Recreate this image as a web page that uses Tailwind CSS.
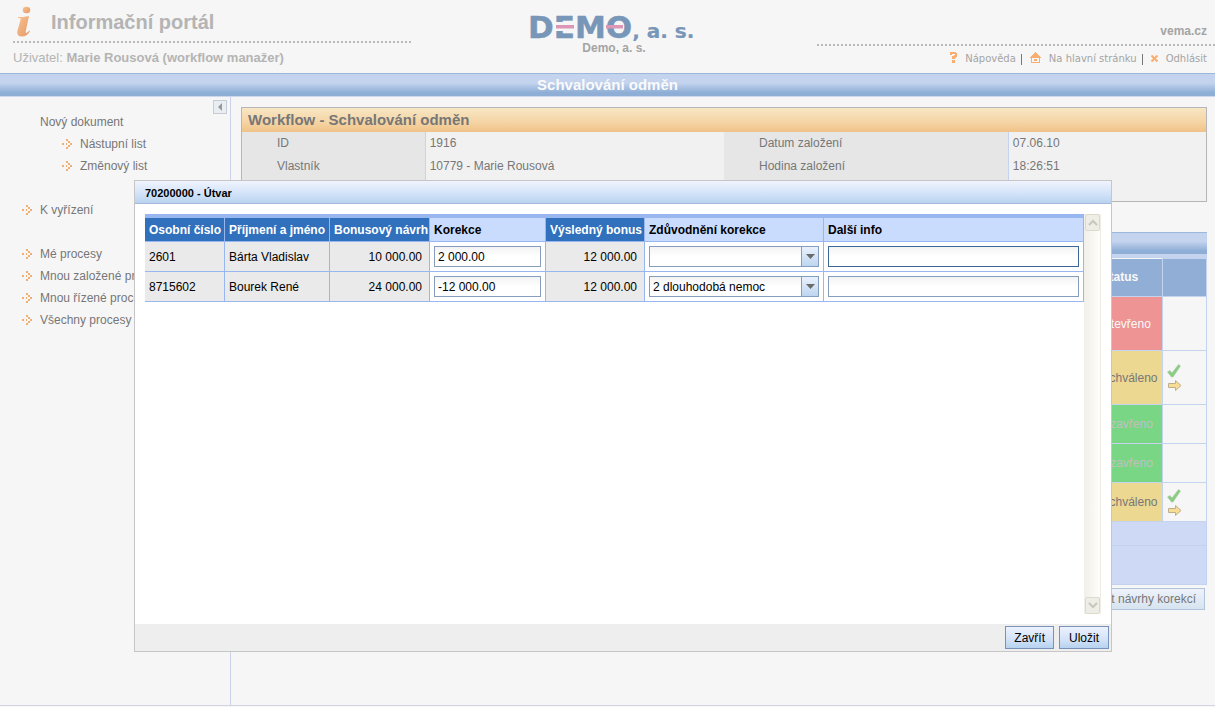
<!DOCTYPE html>
<html lang="cs">
<head>
<meta charset="utf-8">
<title>Informační portál - Schvalování odměn</title>
<script src="https://cdn.jsdelivr.net/npm/@tailwindcss/browser@4"></script>
</head>
<body class="relative flex min-h-screen flex-col bg-[#f6f6f6] font-['Liberation_Sans',Arial,sans-serif] text-xs text-[#777]">
<svg class="hidden" aria-hidden="true">
  <symbol id="arrow" viewBox="0 0 10 10"><path shape-rendering="crispEdges" fill="#efae74" d="M0 4h2v2H0zM4 0h2v2H4zM6 2h2v2H6zM8 4h2v2H8zM6 6h2v2H6zM4 8h2v2H4zM4 4h1v2H4z"/></symbol>
  <symbol id="check" viewBox="0 0 14 14"><path fill="#8ccb84" stroke="#a5cf9d" stroke-width=".6" d="M.5 8 3 6.500l2 2.500L11.500.5l2 1.500L6 13H4.500z"/></symbol>
  <symbol id="next" viewBox="0 0 14 11"><path fill="#f6dc94" stroke="#bfb08c" d="M.5 3.500h7v-3l5.500 5-5.500 5v-3h-7z"/></symbol>
</svg>

<header class="flex h-[73px] justify-between text-[#b4b4b4]">
  <div class="w-[398px] ml-[13px] flex flex-col">
    <div class="flex h-[41px] items-center gap-5 pt-0.5">
      <svg class="ml-1 h-8 w-[14px]" viewBox="0 0 14 32" aria-hidden="true">
        <defs><linearGradient id="ig" x1="0" y1="0" x2="1" y2="1"><stop offset="0" stop-color="#f8c290"/><stop offset="1" stop-color="#e49a68"/></linearGradient></defs>
        <ellipse cx="9.500" cy="4" rx="3.800" ry="3.300" fill="url(#ig)"/>
        <path fill="url(#ig)" d="M1 11c3 0 7 0 11-1L8.800 25c-.4 1.800.2 2.400 1.500 1.600.9-.6 1.200-1.200 1.700-2.200l1 .6C11.500 28.500 8.500 30.500 5 30.500.8 30.500-.3 28 .5 24.500L3.500 14C4 12.500 3.500 12 1 12z"/>
      </svg>
      <h1 class="text-xl font-bold">Informační portál</h1>
    </div>
    <div class="h-[2px] bg-[repeating-linear-gradient(90deg,#b9b9b9_0_2px,transparent_2px_4px)]"></div>
    <p class="mt-1.5 text-[13px] leading-[18px]">Uživatel: <b>Marie Rousová (workflow manažer)</b></p>
  </div>
  <div class="flex flex-col items-center">
    <svg class="h-[41px] w-[174px] overflow-visible" viewBox="0 0 174 41" role="img" aria-label="DEMO, a. s.">
      <text x="1" y="38" fill="#7896b8" stroke="#7896b8" stroke-width=".5" font-family="DejaVu Sans" font-weight="bold" font-size="31">DEMO<tspan font-size="20" stroke-width=".2">, a. s.</tspan></text>
      <path fill="#f6f6f6" d="M28 22h19v9H28z"/><path fill="#dc96b6" d="M29 25h18v3.500H29zM79 25h17v3.500H79z"/>
    </svg>
    <strong class="leading-[15px] text-[#a4a4a4]">Demo, a. s.</strong>
  </div>
  <div class="flex w-[398px] flex-col text-right">
    <strong class="flex h-[44px] items-end justify-end pr-2 pb-[5px] leading-4 text-[#a4a4a4]">vema.cz</strong>
    <div class="h-[2px] bg-[repeating-linear-gradient(90deg,#b9b9b9_0_2px,transparent_2px_4px)]"></div>
    <nav class="mt-[5px] flex items-center justify-end gap-[5px] pr-2 font-['DejaVu_Sans',sans-serif] text-[10px] leading-4 text-[#a4a4a4]">
      <a href="#" class="flex items-center gap-2"><svg class="mb-[3px] h-[11px] w-[7px]" viewBox="0 0 7 11"><path fill="#f8ae70" d="M0 0h6v1h1v4H6v1H5v1H2V4h2V3h1V2H2v1H0zM2 8h3v3H2z"/></svg>Nápověda</a>
      <span class="h-[11px] w-px bg-[#777]"></span>
      <a href="#" class="ml-[3px] flex items-center gap-2"><svg class="mb-[3px] h-[11px] w-[11px]" viewBox="0 0 11 11"><path fill="#f8ae70" fill-rule="evenodd" d="M5 0h1v1h1v1h1v1h1v1h1v1h1v1h-1v5H1V6H0V5h1V4h1V3h1V2h1V1h1zM2 6v4h7V6zM4 7h3v2H4z"/></svg>Na hlavní stránku</a>
      <span class="h-[11px] w-px bg-[#777]"></span>
      <a href="#" class="ml-[3px] flex items-center gap-2"><svg class="mb-0.5 h-[7px] w-[7px]" viewBox="0 0 7 7"><path stroke="#f8ae70" stroke-width="2" d="m.5.5 6 6M6.500.5l-6 6"/></svg>Odhlásit</a>
    </nav>
  </div>
</header>

<h2 class="h-6 border-y border-t-[#9db7db] border-b-[#ccd6ec] bg-linear-to-b from-[#c4d4ee] from-40% to-[#8eaed6] to-85% text-center text-[15px] leading-[22px] font-bold text-[#fafafa]">Schvalování odměn</h2>

<div class="mb-[1px] flex flex-1 border-b border-[#d2d4e2]">
  <nav class="relative w-[231px] shrink-0 border-r border-[#ccd2ea] pt-3.5 leading-[22px]">
    <button class="absolute top-[3px] right-[3px] flex h-[14px] w-[14px] items-center justify-center border border-[#c8ccd2] bg-[#e9edf4]" aria-label="Skrýt nabídku"><svg class="h-2 w-1" viewBox="0 0 4 8"><path fill="#999" d="M4 0v8L0 4z"/></svg></button>
    <p class="pl-10">Nový dokument</p>
    <a href="#" class="flex items-center gap-2 pl-[62px]"><svg class="h-[10px] w-[10px]"><use href="#arrow"/></svg>Nástupní list</a>
    <a href="#" class="flex items-center gap-2 pl-[62px]"><svg class="h-[10px] w-[10px]"><use href="#arrow"/></svg>Změnový list</a>
    <a href="#" class="mt-[22px] flex items-center gap-2 pl-[22px]"><svg class="h-[10px] w-[10px]"><use href="#arrow"/></svg>K vyřízení</a>
    <a href="#" class="mt-[22px] flex items-center gap-2 pl-[22px]"><svg class="h-[10px] w-[10px]"><use href="#arrow"/></svg>Mé procesy</a>
    <a href="#" class="flex items-center gap-2 pl-[22px]"><svg class="h-[10px] w-[10px]"><use href="#arrow"/></svg>Mnou založené procesy</a>
    <a href="#" class="flex items-center gap-2 pl-[22px]"><svg class="h-[10px] w-[10px]"><use href="#arrow"/></svg>Mnou řízené procesy</a>
    <a href="#" class="flex items-center gap-2 pl-[22px]"><svg class="h-[10px] w-[10px]"><use href="#arrow"/></svg>Všechny procesy</a>
  </nav>

  <main class="min-w-0 flex-1 pt-2.5 pr-2 pl-2.5">
    <section class="border border-[#b6b6b6]">
      <h3 class="h-6 bg-linear-to-b from-[#f7e6c4] via-[#f5d4a4] via-60% to-[#f0c288] px-1.5 text-[15px] leading-6 font-bold text-[#777]">Workflow - Schvalování odměn</h3>
      <table class="w-full table-fixed bg-[#f1f1f1] leading-[23px]">
        <colgroup><col class="w-[19%]"><col class="w-[31%]"><col class="w-[29.500%]"><col></colgroup>
        <tbody>
          <tr><th class="bg-[#e6e6e6] pl-[35px] text-left font-normal">ID</th><td class="border-l border-[#c3d3f0] pl-1">1916</td><th class="bg-[#e6e6e6] pl-[35px] text-left font-normal">Datum založení</th><td class="border-l border-[#c3d3f0] pl-1">07.06.10</td></tr>
          <tr><th class="bg-[#e6e6e6] pl-[35px] text-left font-normal">Vlastník</th><td class="border-l border-[#c3d3f0] pl-1">10779 - Marie Rousová</td><th class="bg-[#e6e6e6] pl-[35px] text-left font-normal">Hodina založení</th><td class="border-l border-[#c3d3f0] pl-1">18:26:51</td></tr>
          <tr><th class="h-[23px] bg-[#e6e6e6]"></th><td class="border-l border-[#c3d3f0]"></td><th class="bg-[#e6e6e6]"></th><td class="border-l border-[#c3d3f0]"></td></tr>
        </tbody>
      </table>
    </section>

    <section class="mt-[30px]">
      <div class="h-[22px] border-t border-[#9db7db] bg-linear-to-b from-[#c4d4ee] from-40% to-[#8eaed6] to-85%"></div>
      <div class="h-1 bg-[#c4d4ee]"></div>
      <table class="w-full table-fixed border-collapse">
        <colgroup><col><col class="w-[65px]"><col class="w-[44px]"></colgroup>
        <thead><tr class="h-[38px] bg-[#91afd6] text-left text-[#fafafa]"><th></th><th class="px-1">Status</th><th class="border border-[#c4d4ee]"></th></tr></thead>
        <tbody>
          <tr class="h-[54px] border border-[#c4d4ee]"><td></td><td class="bg-[#ee9494] px-1 text-[#fafafa]">Otevřeno</td><td class="border border-[#c4d4ee]"></td></tr>
          <tr class="h-[54px] border border-[#c4d4ee]"><td></td><td class="bg-[#edd892] px-1">Schváleno</td><td class="border border-[#c4d4ee] pl-1"><svg class="mb-0.5 h-[14px] w-[14px]"><use href="#check"/></svg><svg class="ml-px h-[11px] w-[14px]"><use href="#next"/></svg></td></tr>
          <tr class="h-[39px] border border-[#c4d4ee]"><td></td><td class="bg-[#78d684] px-1 text-[#c2bfc2]">Uzavřeno</td><td class="border border-[#c4d4ee]"></td></tr>
          <tr class="h-[39px] border border-[#c4d4ee]"><td></td><td class="bg-[#78d684] px-1 text-[#c2bfc2]">Uzavřeno</td><td class="border border-[#c4d4ee]"></td></tr>
          <tr class="h-[39px] border border-[#c4d4ee]"><td></td><td class="bg-[#edd892] px-1">Schváleno</td><td class="border border-[#c4d4ee] pl-1"><svg class="mb-0.5 h-[14px] w-[14px]"><use href="#check"/></svg><svg class="ml-px h-[11px] w-[14px]"><use href="#next"/></svg></td></tr>
          <tr class="h-6 border border-[#c4d2f0] bg-[#ced9f6]"><td colspan="3"></td></tr>
          <tr class="h-[39px] border border-[#c4d2f0] bg-[#ced9f6]"><td colspan="3"></td></tr>
        </tbody>
      </table>
      <div class="flex justify-end pt-[3px] pr-0.5"><button class="h-[22px] border border-[#b4c3dc] bg-linear-to-b from-[#eef2fa] to-[#d6e4f0] px-2">Zobrazit návrhy korekcí</button></div>
    </section>
  </main>
</div>

<div role="dialog" aria-labelledby="dlg-title" class="absolute top-[180px] right-[103px] left-[134px] flex min-h-[472px] flex-col border border-[#c6c6c6] bg-white text-black">
  <h2 id="dlg-title" class="h-[23px] border-b border-[#aab8de] bg-linear-to-b from-[#f0f4fe] via-[#cfe0f8] via-65% to-[#b8d3ee] pl-[10px] text-[11px] leading-6 font-bold">70200000 - Útvar</h2>
  <div class="flex flex-1 p-2.5">
    <div class="min-w-0 flex-1">
      <table class="w-full table-fixed border-separate border-spacing-0 border-t-4 border-[#98b6f0]">
        <colgroup><col class="w-[80px]"><col class="w-[105px]"><col class="w-[100px]"><col class="w-[116px]"><col class="w-[99px]"><col class="w-[179px]"><col></colgroup>
        <thead>
          <tr class="h-6 text-left whitespace-nowrap [&>th]:border-r [&>th]:border-b [&>th]:border-[#98b6f0] [&>th]:px-1">
            <th class="bg-[#3070bc] text-white">Osobní číslo</th><th class="bg-[#3070bc] text-white">Příjmení a jméno</th><th class="bg-[#3070bc] text-white">Bonusový návrh</th><th class="bg-[#cadcfe]">Korekce</th><th class="bg-[#3070bc] text-white">Výsledný bonus</th><th class="bg-[#cadcfe]">Zdůvodnění korekce</th><th class="bg-[#cadcfe]">Další info</th>
          </tr>
        </thead>
        <tbody>
          <tr class="h-[30px] [&>td]:border-r [&>td]:border-b [&>td]:border-[#98b6f0] [&>td]:px-1">
            <td class="bg-[#eaeaea]">2601</td><td class="bg-[#eaeaea]">Bárta Vladislav</td><td class="bg-[#eaeaea] text-right"><span class="pr-[3px]">10 000.00</span></td>
            <td><input aria-label="Korekce, Bárta Vladislav" value="2 000.00" class="block h-[21px] w-full border border-[#869dbd] bg-linear-to-b from-[#f3f3f3] to-white to-50% px-[3px]"></td>
            <td class="bg-[#eaeaea] text-right"><span class="pr-[3px]">12 000.00</span></td>
            <td><div class="flex h-[21px] border border-[#869dbd] bg-linear-to-b from-[#f3f3f3] to-white to-50%"><select aria-label="Zdůvodnění korekce, Bárta Vladislav" class="min-w-0 flex-1 appearance-none px-[3px]"><option></option><option>2 dlouhodobá nemoc</option></select><span class="flex w-[17px] items-center justify-center border-l border-[#869dbd] bg-linear-to-b from-[#eaf1fd] to-[#bdd6f0]"><svg class="h-[5px] w-[9px]" viewBox="0 0 9 5"><path fill="#6b6b6b" d="M0 0h9L4.500 5z"/></svg></span></div></td>
            <td><input aria-label="Další info, Bárta Vladislav" class="block h-[21px] w-full border border-[#3b6898] bg-linear-to-b from-[#f3f3f3] to-white to-50% px-[3px]"></td>
          </tr>
          <tr class="h-[30px] [&>td]:border-r [&>td]:border-b [&>td]:border-[#98b6f0] [&>td]:px-1">
            <td class="bg-[#eaeaea]">8715602</td><td class="bg-[#eaeaea]">Bourek René</td><td class="bg-[#eaeaea] text-right"><span class="pr-[3px]">24 000.00</span></td>
            <td><input aria-label="Korekce, Bourek René" value="-12 000.00" class="block h-[21px] w-full border border-[#869dbd] bg-linear-to-b from-[#f3f3f3] to-white to-50% px-[3px]"></td>
            <td class="bg-[#eaeaea] text-right"><span class="pr-[3px]">12 000.00</span></td>
            <td><div class="flex h-[21px] border border-[#869dbd] bg-linear-to-b from-[#f3f3f3] to-white to-50%"><select aria-label="Zdůvodnění korekce, Bourek René" class="min-w-0 flex-1 appearance-none px-[3px]"><option>2 dlouhodobá nemoc</option><option></option></select><span class="flex w-[17px] items-center justify-center border-l border-[#869dbd] bg-linear-to-b from-[#eaf1fd] to-[#bdd6f0]"><svg class="h-[5px] w-[9px]" viewBox="0 0 9 5"><path fill="#6b6b6b" d="M0 0h9L4.500 5z"/></svg></span></div></td>
            <td><input aria-label="Další info, Bourek René" class="block h-[21px] w-full border border-[#869dbd] bg-linear-to-b from-[#f3f3f3] to-white to-50% px-[3px]"></td>
          </tr>
        </tbody>
      </table>
    </div>
    <div class="flex w-[17px] flex-col justify-between border-r border-[#eeede5] bg-linear-to-r from-[#f1efe9] to-[#fefefb]">
      <button aria-label="Posunout nahoru" class="ml-px flex h-[17px] items-center justify-center rounded-xs border border-[#dcdacb] bg-[#eeede6]"><svg class="h-[7px] w-[10px]" viewBox="0 0 10 7"><path fill="none" stroke="#c8c7bd" stroke-width="2" d="m1 6 4-4 4 4"/></svg></button>
      <button aria-label="Posunout dolů" class="ml-px flex h-[17px] items-center justify-center rounded-xs border border-[#dcdacb] bg-[#eeede6]"><svg class="h-[7px] w-[10px]" viewBox="0 0 10 7"><path fill="none" stroke="#c8c7bd" stroke-width="2" d="m1 1 4 4 4-4"/></svg></button>
    </div>
  </div>
  <div class="flex h-[27px] items-center justify-end gap-[5px] bg-[#eeeeee] pr-0.5">
    <button class="h-[23px] border border-[#7892b8] bg-linear-to-b from-[#ecf2fe] via-[#d3e2f9] via-60% to-[#b6d2ee] px-2">Zavřít</button>
    <button class="h-[23px] border border-[#7892b8] bg-linear-to-b from-[#ecf2fe] via-[#d3e2f9] via-60% to-[#b6d2ee] px-[9px]">Uložit</button>
  </div>
</div>
</body>
</html>
